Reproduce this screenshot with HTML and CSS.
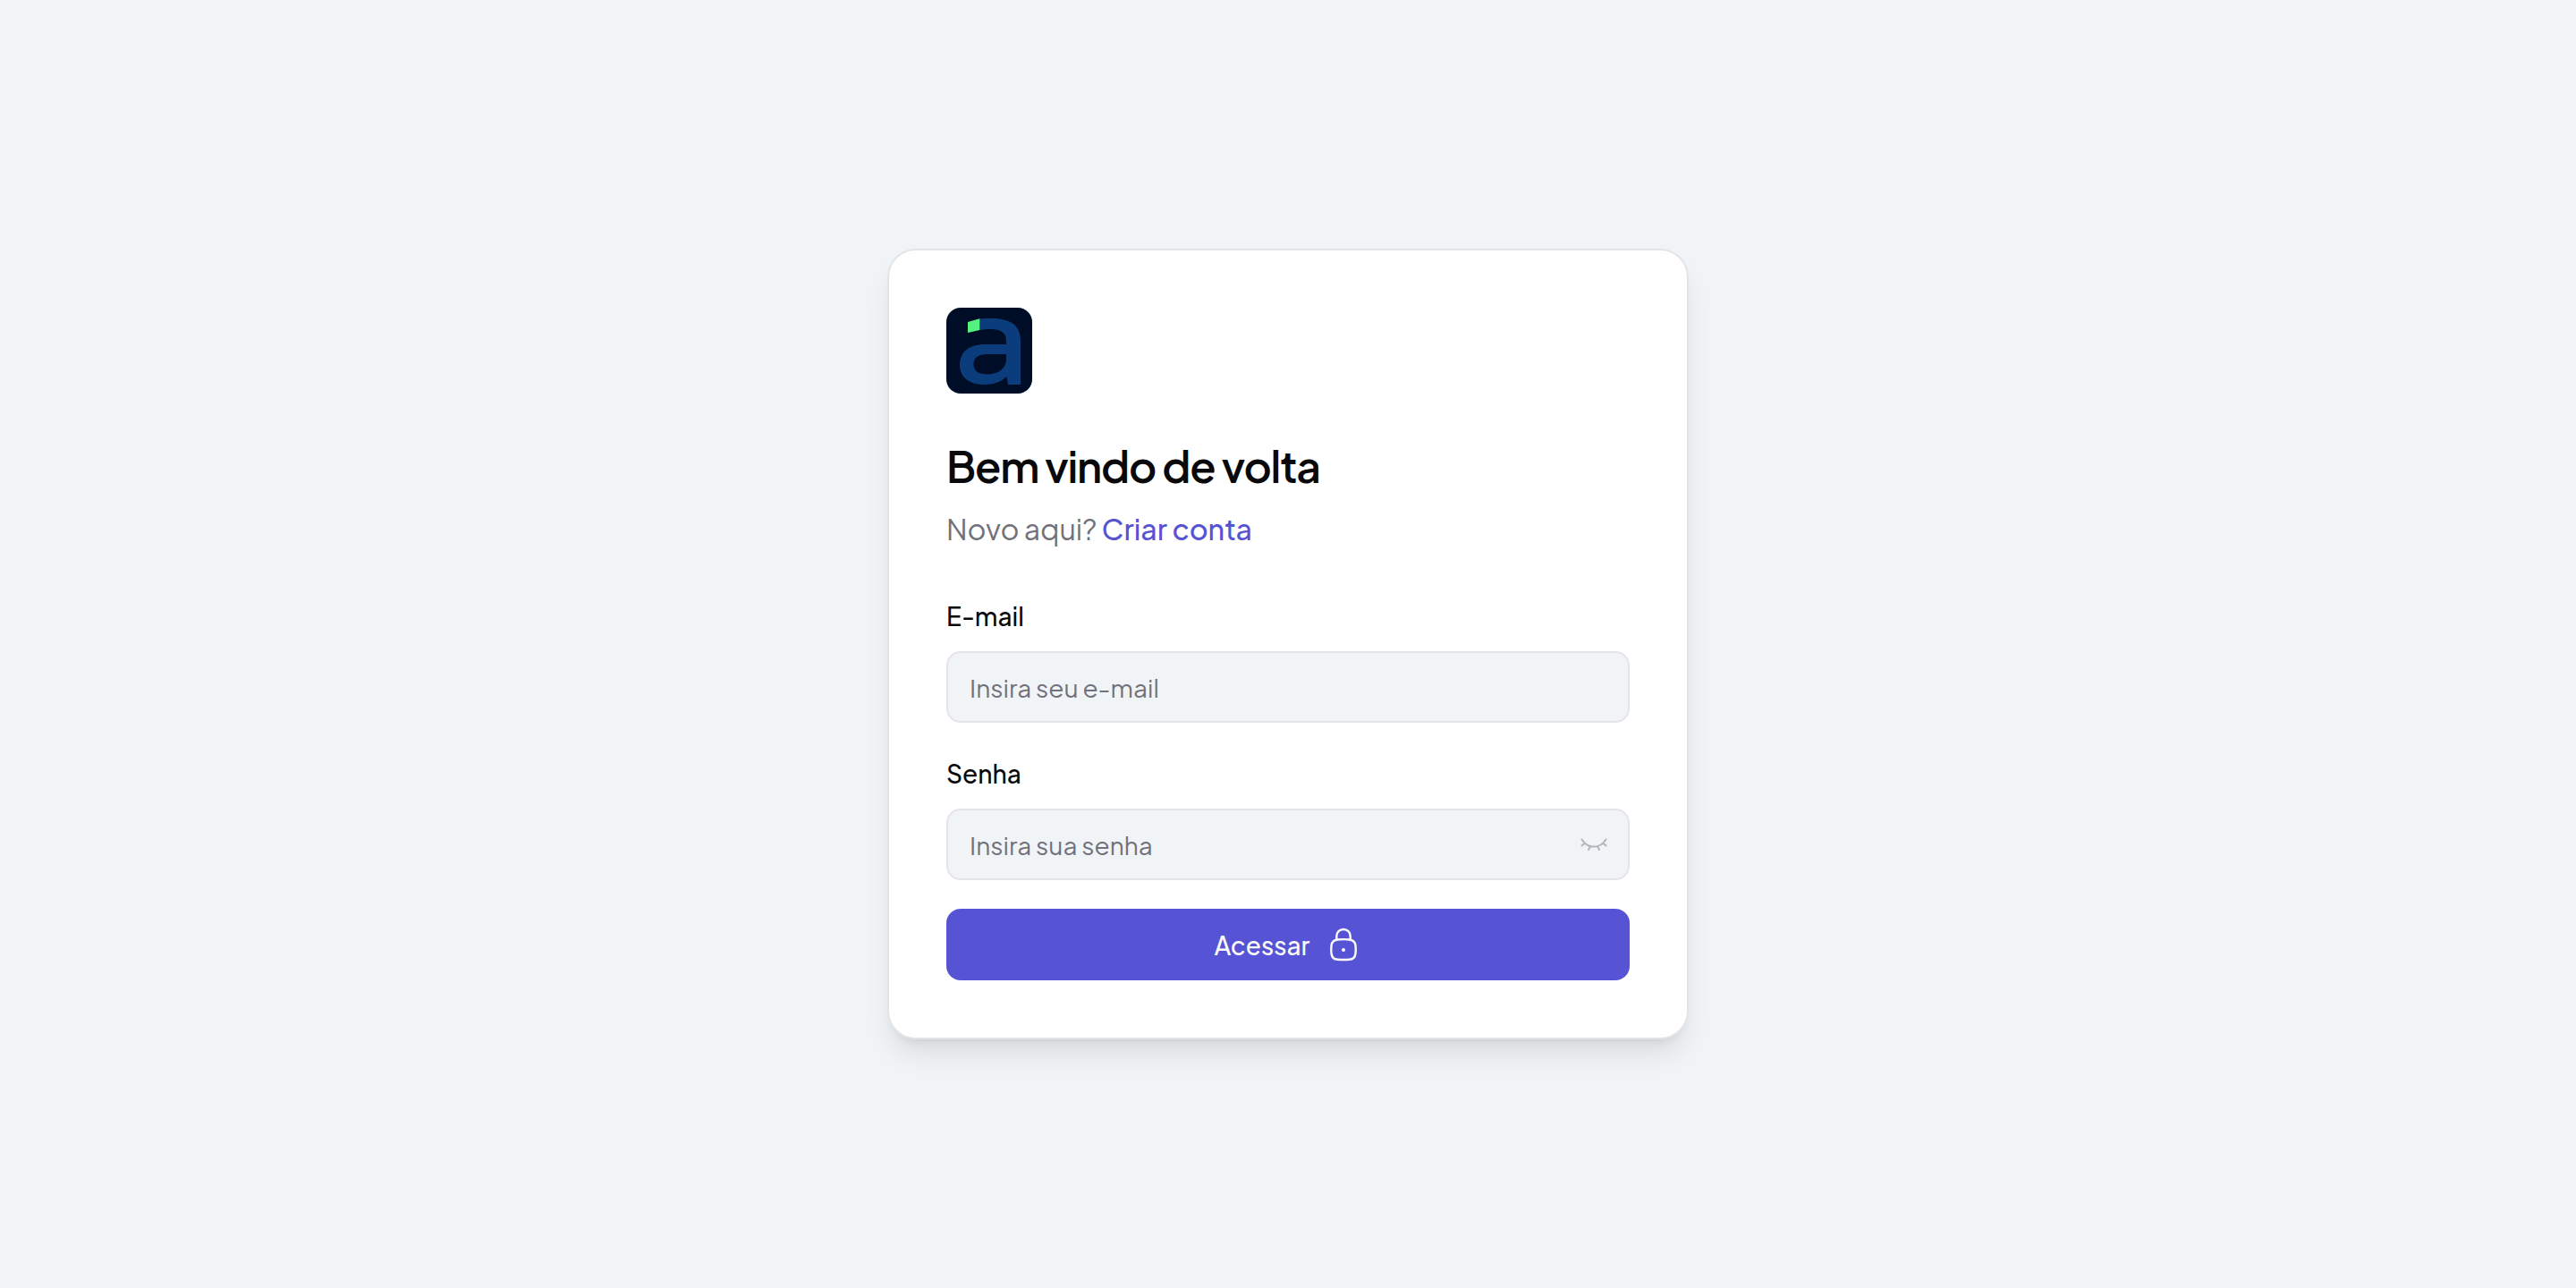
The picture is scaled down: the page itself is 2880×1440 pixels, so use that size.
FILE: index.html
```html
<!DOCTYPE html>
<html lang="pt-BR">
<head>
<meta charset="utf-8">
<meta name="viewport" content="width=device-width, initial-scale=1">
<title>Entrar</title>
<link rel="stylesheet" href="styles.css">
</head>
<body>
<main class="card">
  <svg class="logo" viewBox="0 0 96 96" aria-hidden="true">
    <rect width="96" height="96" rx="16" fill="#000d26"/>
    <path fill="#0b3d7c" fill-rule="evenodd" d="M37 12.5C41 12 45 12 50 12C71 12 83 19 83 37V86H69L67.500 77C61 83 53 86 42 86C25 86 15 77 15 64C15 50 25 41 43 41H67V37C67 28 61 24 50 24C45 24 41 24.500 37 25ZM67 52H46C35 52 30.500 56 30.500 63C30.500 71 36 74.500 46 74.500C58 74.500 67 68 67 58Z"/>
    <path fill="#54f27f" d="M24 16L37.300 12.300V25L24 28Z"/>
  </svg>
  <h1 class="title">Bem vindo de volta</h1>
  <p class="subtitle">Novo aqui? <a class="link" href="#criar-conta">Criar conta</a></p>
  <form class="form">
    <div class="fields">
      <div class="field">
        <label class="label" for="email">E-mail</label>
        <input class="input" id="email" type="email" placeholder="Insira seu e-mail">
      </div>
      <div class="field">
        <label class="label" for="senha">Senha</label>
        <div class="password">
          <input class="input input-password" id="senha" type="password" placeholder="Insira sua senha">
          <button class="toggle" type="button" aria-label="Mostrar senha">
            <svg class="toggle-icon" viewBox="0 0 32 32" aria-hidden="true">
              <path d="M2.500 10.500C9 21.300 23 21.300 29.500 10.500M6 14.500L2.500 17.500M26 14.500L29.500 17.500M12 18L10 22M20 18L22 22"/>
            </svg>
          </button>
        </div>
      </div>
    </div>
    <button class="submit" type="submit">
      <span>Acessar</span>
      <svg class="lock" viewBox="0 0 40 40" aria-hidden="true">
        <path d="M12.300 15V10.700C12.300 6.200 15.600 3 20 3S27.700 6.200 27.700 10.700V15"/>
        <path d="M13.500 14.500Q20 13.700 26.500 14.500C31 15 33 17 33.500 21Q34 26 33.500 30C33 34.500 31 36.500 26.500 36.800Q20 37.300 13.500 36.800C9 36.500 7 34.500 6.500 30Q6 26 6.500 21C7 17 9 15 13.500 14.500Z"/>
        <circle cx="20" cy="26" r="2"/>
      </svg>
    </button>
  </form>
</main>
</body>
</html>
```
FILE: styles.css
```css
*,
*::before,
*::after {
  box-sizing: border-box;
}

body {
  margin: 0;
  min-height: 100vh;
  display: flex;
  align-items: center;
  justify-content: center;
  background: #f0f4f7;
  color: #09090b;
  font-family: "Plus Jakarta Sans", Inter, sans-serif;
  font-size: 28px;
}

.card {
  width: 100%;
  max-width: 896px;
  padding: 64px;
  border: 2px solid #e4e4e7;
  border-radius: 32px;
  background: #fff;
  box-shadow: 0 20px 30px -6px rgba(0, 0, 0, 0.1), 0 8px 12px -8px rgba(0, 0, 0, 0.1);
}

.logo {
  display: block;
  width: 96px;
  height: 96px;
}

.title {
  margin: 48px 0 12px;
  font-size: 48px;
  font-weight: 600;
  letter-spacing: -0.025em;
  line-height: 66px;
}

.subtitle {
  margin: 0 0 54px;
  color: #71717a;
  font-size: 32px;
  line-height: 50px;
}

.link {
  color: #5653d4;
  font-weight: 500;
  text-decoration: none;
}

.form {
  display: grid;
  gap: 32px;
}

.fields {
  display: grid;
  gap: 38px;
}

.field {
  display: grid;
  gap: 20px;
}

.label {
  font-weight: 500;
  line-height: 38px;
}

.input {
  width: 100%;
  height: 80px;
  padding: 0 24px;
  border: 2px solid #e4e4e7;
  border-radius: 16px;
  background: #f0f4f7;
  color: inherit;
  font: inherit;
}

.input::placeholder {
  color: #71717a;
  opacity: 1;
}

.password {
  position: relative;
  display: flex;
}

.input-password {
  padding-right: 72px;
}

.toggle {
  position: absolute;
  top: 24px;
  right: 24px;
  width: 32px;
  height: 32px;
  padding: 0;
  border: 0;
  background: none;
  color: #b2b5ba;
  cursor: pointer;
}

.toggle-icon,
.lock {
  display: block;
  fill: none;
  stroke: currentColor;
  stroke-width: 2;
  stroke-linecap: round;
  stroke-linejoin: round;
}

.lock {
  width: 40px;
  height: 40px;
}

.lock path {
  stroke-width: 2.4;
}

.lock circle {
  fill: currentColor;
  stroke: none;
}

.submit {
  display: flex;
  align-items: center;
  justify-content: center;
  gap: 18px;
  height: 80px;
  padding: 0 32px;
  border: 0;
  border-radius: 16px;
  background: #5653d4;
  color: #fafafa;
  font: inherit;
  font-weight: 500;
  cursor: pointer;
}
```
